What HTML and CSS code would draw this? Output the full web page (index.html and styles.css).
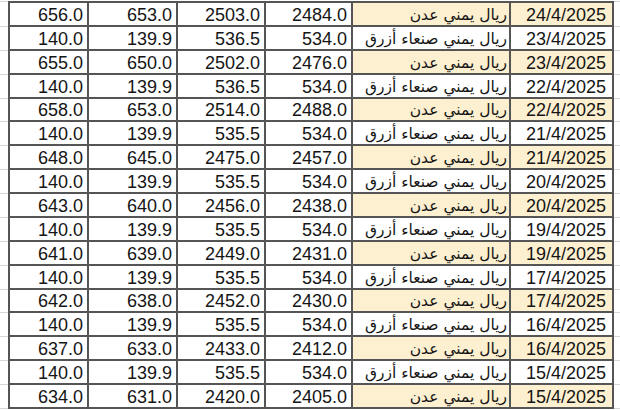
FILE: index.html
```html
<!DOCTYPE html>
<html lang="en">
<head>
<meta charset="utf-8">
<title>Exchange rates</title>
<link rel="stylesheet" href="styles.css">
</head>
<body>
<div class="sheet">
  <div class="row"><div class="gutter"></div><div class="cell first">656.0</div><div class="cell">653.0</div><div class="cell">2503.0</div><div class="cell">2484.0</div><div class="cell name hl"><span dir="rtl" lang="ar">ريال يمني عدن</span></div><div class="cell date hl">24/4/2025</div><div class="gutter"></div></div>
  <div class="row"><div class="gutter"></div><div class="cell first">140.0</div><div class="cell">139.9</div><div class="cell">536.5</div><div class="cell">534.0</div><div class="cell name"><span dir="rtl" lang="ar">ريال يمني صنعاء أزرق</span></div><div class="cell date">23/4/2025</div><div class="gutter"></div></div>
  <div class="row"><div class="gutter"></div><div class="cell first">655.0</div><div class="cell">650.0</div><div class="cell">2502.0</div><div class="cell">2476.0</div><div class="cell name hl"><span dir="rtl" lang="ar">ريال يمني عدن</span></div><div class="cell date hl">23/4/2025</div><div class="gutter"></div></div>
  <div class="row"><div class="gutter"></div><div class="cell first">140.0</div><div class="cell">139.9</div><div class="cell">536.5</div><div class="cell">534.0</div><div class="cell name"><span dir="rtl" lang="ar">ريال يمني صنعاء أزرق</span></div><div class="cell date">22/4/2025</div><div class="gutter"></div></div>
  <div class="row"><div class="gutter"></div><div class="cell first">658.0</div><div class="cell">653.0</div><div class="cell">2514.0</div><div class="cell">2488.0</div><div class="cell name hl"><span dir="rtl" lang="ar">ريال يمني عدن</span></div><div class="cell date hl">22/4/2025</div><div class="gutter"></div></div>
  <div class="row"><div class="gutter"></div><div class="cell first">140.0</div><div class="cell">139.9</div><div class="cell">535.5</div><div class="cell">534.0</div><div class="cell name"><span dir="rtl" lang="ar">ريال يمني صنعاء أزرق</span></div><div class="cell date">21/4/2025</div><div class="gutter"></div></div>
  <div class="row"><div class="gutter"></div><div class="cell first">648.0</div><div class="cell">645.0</div><div class="cell">2475.0</div><div class="cell">2457.0</div><div class="cell name hl"><span dir="rtl" lang="ar">ريال يمني عدن</span></div><div class="cell date hl">21/4/2025</div><div class="gutter"></div></div>
  <div class="row"><div class="gutter"></div><div class="cell first">140.0</div><div class="cell">139.9</div><div class="cell">535.5</div><div class="cell">534.0</div><div class="cell name"><span dir="rtl" lang="ar">ريال يمني صنعاء أزرق</span></div><div class="cell date">20/4/2025</div><div class="gutter"></div></div>
  <div class="row"><div class="gutter"></div><div class="cell first">643.0</div><div class="cell">640.0</div><div class="cell">2456.0</div><div class="cell">2438.0</div><div class="cell name hl"><span dir="rtl" lang="ar">ريال يمني عدن</span></div><div class="cell date hl">20/4/2025</div><div class="gutter"></div></div>
  <div class="row"><div class="gutter"></div><div class="cell first">140.0</div><div class="cell">139.9</div><div class="cell">535.5</div><div class="cell">534.0</div><div class="cell name"><span dir="rtl" lang="ar">ريال يمني صنعاء أزرق</span></div><div class="cell date">19/4/2025</div><div class="gutter"></div></div>
  <div class="row"><div class="gutter"></div><div class="cell first">641.0</div><div class="cell">639.0</div><div class="cell">2449.0</div><div class="cell">2431.0</div><div class="cell name hl"><span dir="rtl" lang="ar">ريال يمني عدن</span></div><div class="cell date hl">19/4/2025</div><div class="gutter"></div></div>
  <div class="row"><div class="gutter"></div><div class="cell first">140.0</div><div class="cell">139.9</div><div class="cell">535.5</div><div class="cell">534.0</div><div class="cell name"><span dir="rtl" lang="ar">ريال يمني صنعاء أزرق</span></div><div class="cell date">17/4/2025</div><div class="gutter"></div></div>
  <div class="row"><div class="gutter"></div><div class="cell first">642.0</div><div class="cell">638.0</div><div class="cell">2452.0</div><div class="cell">2430.0</div><div class="cell name hl"><span dir="rtl" lang="ar">ريال يمني عدن</span></div><div class="cell date hl">17/4/2025</div><div class="gutter"></div></div>
  <div class="row"><div class="gutter"></div><div class="cell first">140.0</div><div class="cell">139.9</div><div class="cell">535.5</div><div class="cell">534.0</div><div class="cell name"><span dir="rtl" lang="ar">ريال يمني صنعاء أزرق</span></div><div class="cell date">16/4/2025</div><div class="gutter"></div></div>
  <div class="row"><div class="gutter"></div><div class="cell first">637.0</div><div class="cell">633.0</div><div class="cell">2433.0</div><div class="cell">2412.0</div><div class="cell name hl"><span dir="rtl" lang="ar">ريال يمني عدن</span></div><div class="cell date hl">16/4/2025</div><div class="gutter"></div></div>
  <div class="row"><div class="gutter"></div><div class="cell first">140.0</div><div class="cell">139.9</div><div class="cell">535.5</div><div class="cell">534.0</div><div class="cell name"><span dir="rtl" lang="ar">ريال يمني صنعاء أزرق</span></div><div class="cell date">15/4/2025</div><div class="gutter"></div></div>
  <div class="row"><div class="gutter"></div><div class="cell first">634.0</div><div class="cell">631.0</div><div class="cell">2420.0</div><div class="cell">2405.0</div><div class="cell name hl"><span dir="rtl" lang="ar">ريال يمني عدن</span></div><div class="cell date hl">15/4/2025</div><div class="gutter"></div></div>
</div>
</body>
</html>
```

FILE: styles.css
```css
html, body {
  margin: 0;
  padding: 0;
  background: #ffffff;
}

body {
  font-family: "Liberation Sans", Arial, sans-serif;
  color: #151515;
  overflow: hidden;
}

.sheet {
  padding-top: 1px;
}

.row {
  display: grid;
  grid-template-columns: 8px 81px 89px 88px 87px 158px 103px 1fr;
  height: 23.88px;
}

.row:first-child {
  height: 25.88px;
}

.row:first-child .cell {
  border-top: 2px solid #555555;
}

.row:first-child .gutter {
  border-top: 1px solid #d6d6d6;
}

.gutter {
  box-sizing: border-box;
  border-bottom: 1px solid #d6d6d6;
}

.cell {
  box-sizing: border-box;
  border-bottom: 2px solid #555555;
  border-right: 2px solid #555555;
  display: flex;
  align-items: center;
  justify-content: flex-end;
  padding: 2px 4px 0 0;
  font-size: 18px;
  line-height: 20px;
  white-space: nowrap;
  overflow: hidden;
}

.cell.first {
  border-left: 2px solid #555555;
}

.cell.name {
  padding-right: 2px;
  font-family: "DejaVu Sans", sans-serif;
  font-size: 15.5px;
}

.cell.date {
  padding-right: 6px;
}

.hl {
  background: #fdf0d0;
}
```
